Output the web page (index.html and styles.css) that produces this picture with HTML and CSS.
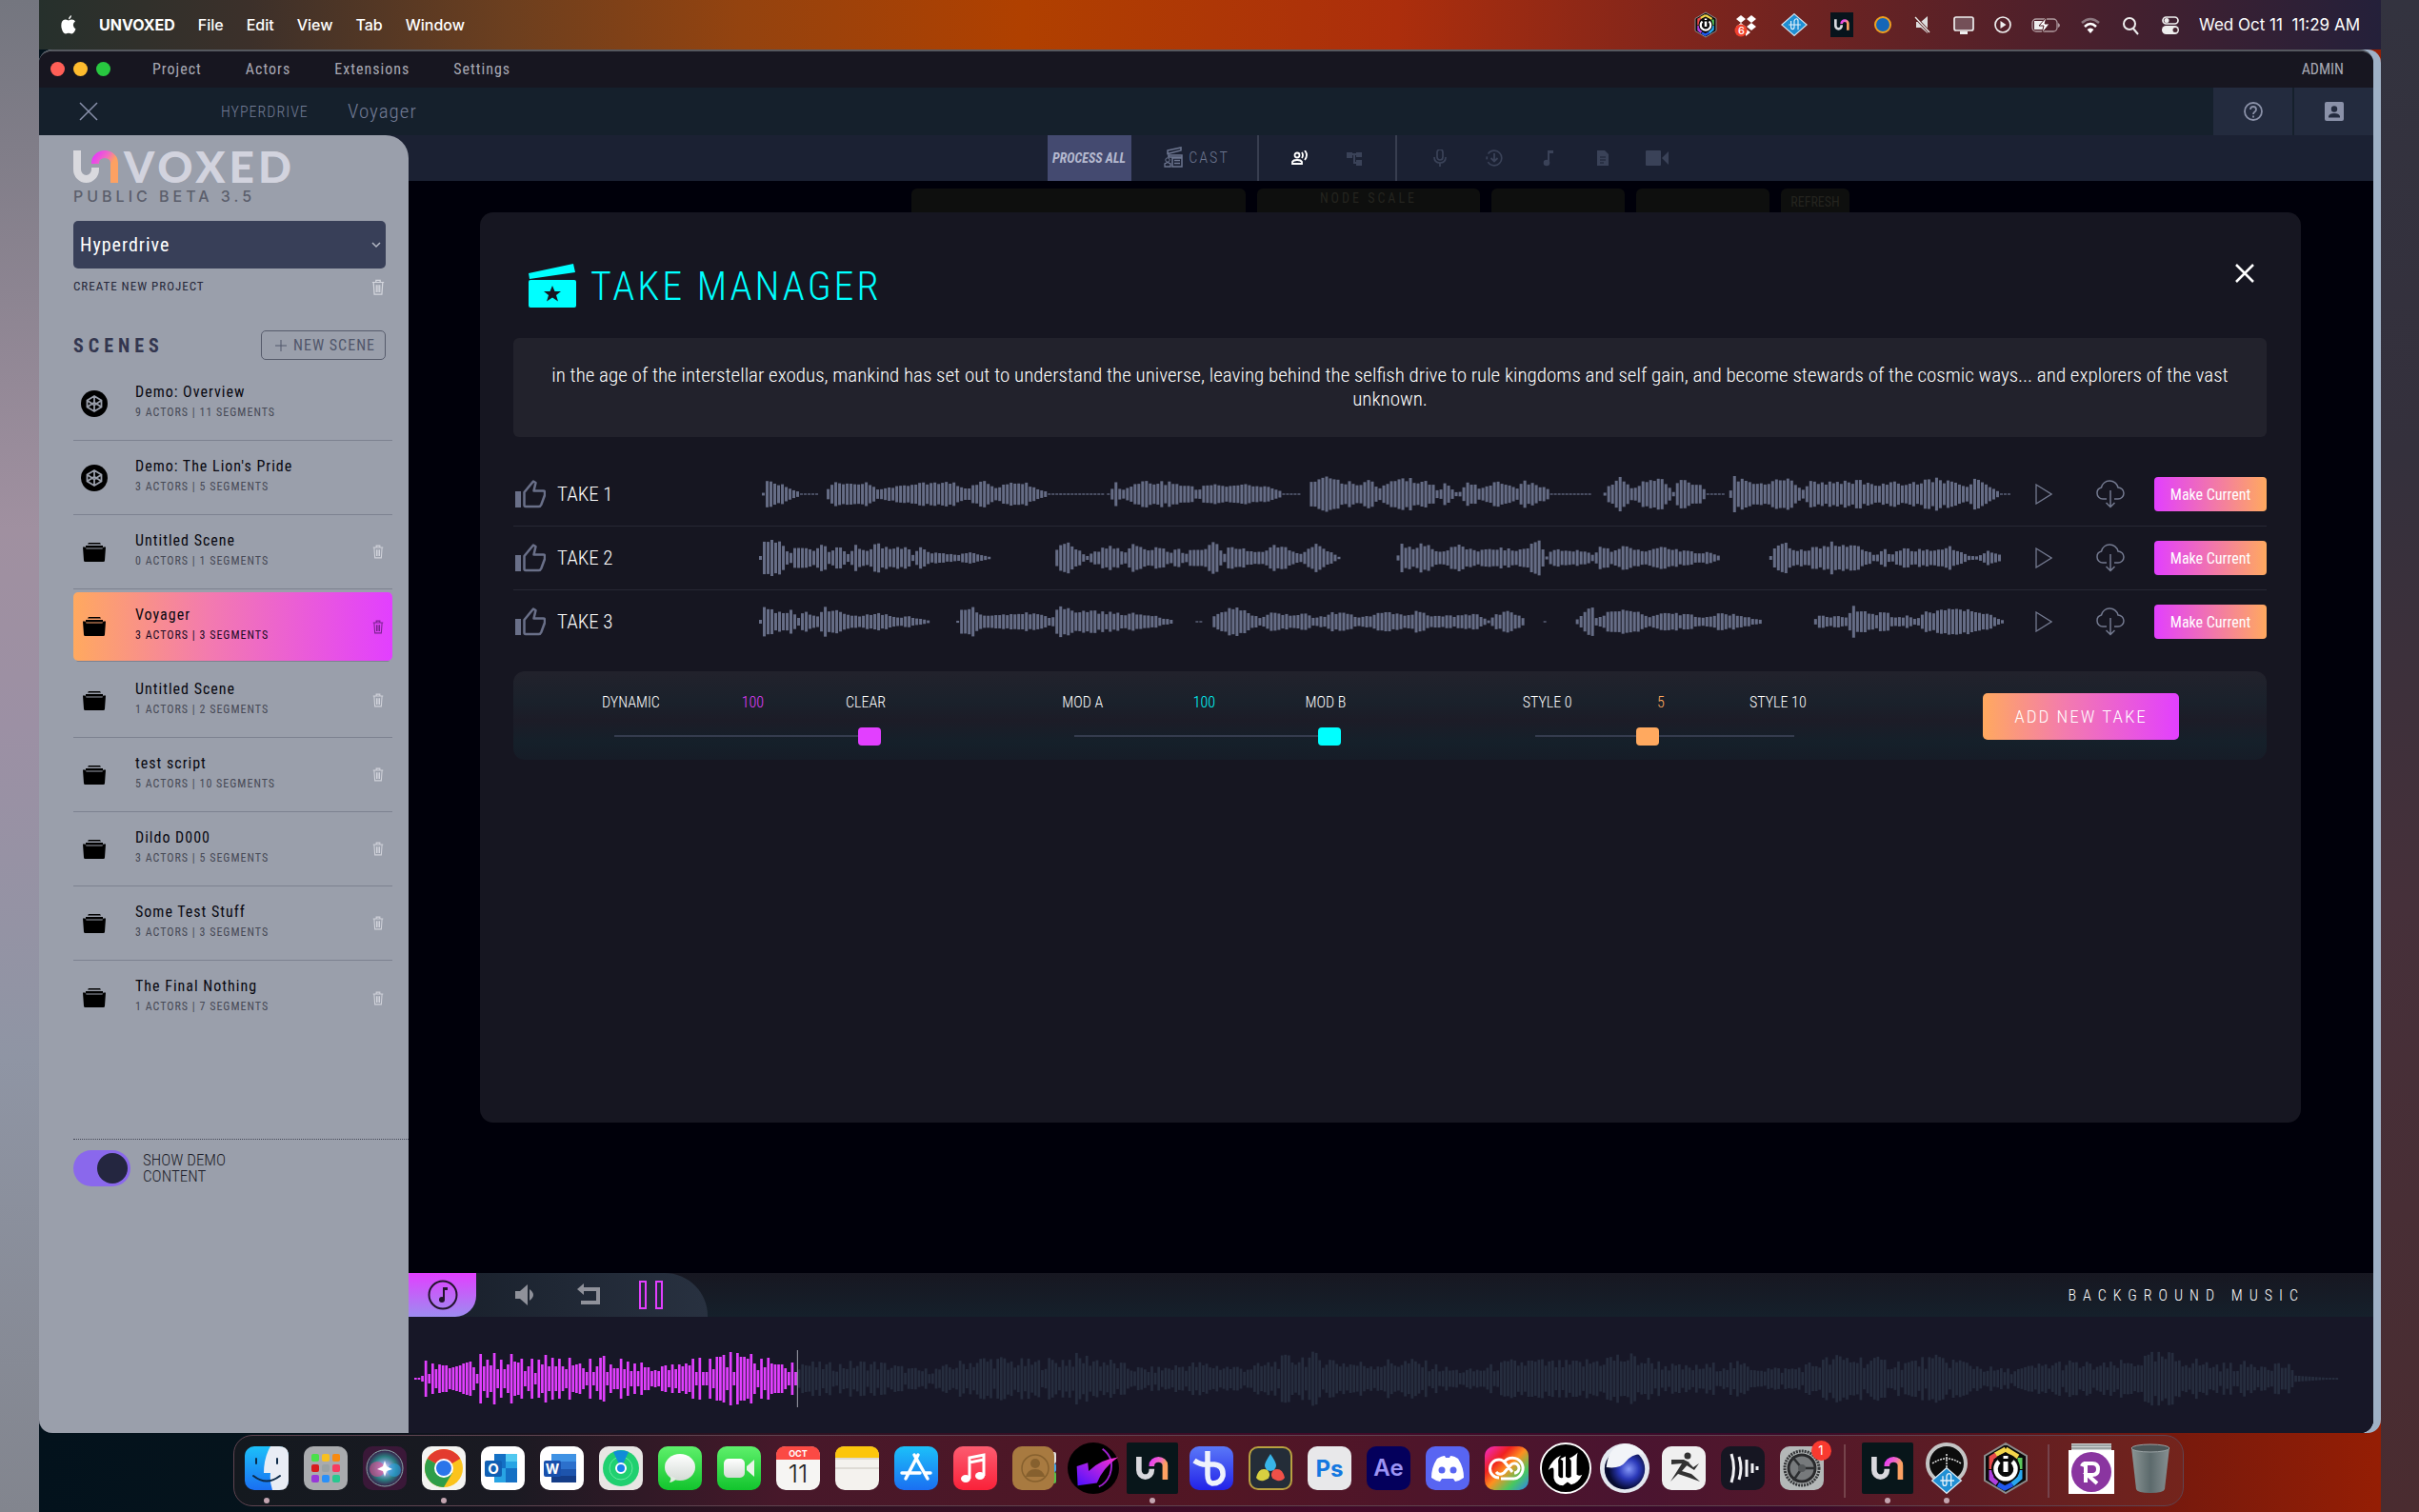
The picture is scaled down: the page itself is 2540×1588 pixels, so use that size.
FILE: index.html
```html
<!DOCTYPE html>
<html lang="en">
<head>
    <meta charset="UTF-8">
    <meta name="viewport" content="width=device-width, initial-scale=1.0">
    <title>UNVOXED - Take Manager</title>
    <link rel="stylesheet" href="styles.css">
</head>
<body>
    <!-- Shared icons -->
    <svg class="sprite" aria-hidden="true">
        <defs>
            <linearGradient id="gBrand" x1="0" x2="1" y1="0" y2="1"><stop offset="0" stop-color="#e83cf5"/><stop offset=".35" stop-color="#f06cc0"/><stop offset=".6" stop-color="#fda162"/></linearGradient>
            <linearGradient id="gBlue" x1="0" x2="0" y1="0" y2="1"><stop offset="0" stop-color="#1cc0f9"/><stop offset="1" stop-color="#1a6ff2"/></linearGradient>
            <linearGradient id="gGreen" x1="0" x2="0" y1="0" y2="1"><stop offset="0" stop-color="#5ef06b"/><stop offset="1" stop-color="#12c42d"/></linearGradient>
            <linearGradient id="gRed" x1="0" x2="0" y1="0" y2="1"><stop offset="0" stop-color="#fc5c70"/><stop offset="1" stop-color="#fa2139"/></linearGradient>
            <linearGradient id="gWhite" x1="0" x2="0" y1="0" y2="1"><stop offset="0" stop-color="#ffffff"/><stop offset="1" stop-color="#d5dbd6"/></linearGradient>
            <linearGradient id="gIndigo" x1="0" x2="0" y1="0" y2="1"><stop offset="0" stop-color="#5a78f8"/><stop offset="1" stop-color="#2222e8"/></linearGradient>
            <linearGradient id="gCloud" x1="0" x2="1" y1="0" y2="1"><stop offset="0" stop-color="#f02cd0"/><stop offset=".3" stop-color="#f02020"/><stop offset=".5" stop-color="#ff9020"/><stop offset=".75" stop-color="#48c860"/><stop offset="1" stop-color="#3080f0"/></linearGradient>
            <linearGradient id="gTick" x1="0" x2="1" y1="1" y2="0"><stop offset="0" stop-color="#4a10ff"/><stop offset="1" stop-color="#ff30d0"/></linearGradient>
            <linearGradient id="gBin" x1="0" x2="1" y1="0" y2="0"><stop offset="0" stop-color="#8b9595"/><stop offset=".5" stop-color="#5c6a6c"/><stop offset="1" stop-color="#879092"/></linearGradient>
            <radialGradient id="gSiri"><stop offset="0" stop-color="#ffffff"/><stop offset=".3" stop-color="#8fa4d8"/><stop offset=".65" stop-color="#2a7d80"/><stop offset="1" stop-color="#3a1c48"/></radialGradient>
            <radialGradient id="gBall" cx=".6" cy=".5"><stop offset="0" stop-color="#8598f8"/><stop offset=".5" stop-color="#2a38b8"/><stop offset="1" stop-color="#060a30"/></radialGradient>
        </defs>

        <symbol id="un" viewBox="0 0 48 34">
            <path d="M4 0v20a9.500 10 0 0 0 19 0v-2" fill="none" stroke="#d9d9de" stroke-width="8"/>
            <path d="M23 14v-1a10 9 0 0 1 20 0v21" fill="none" stroke="url(#gBrand)" stroke-width="8"/>
        </symbol>
        <symbol id="trash" viewBox="0 0 16 20">
            <path d="M1 4h14M5.500 4V1.500h5V4M2.500 4l1 14.500h9L13.500 4M6 7v9M8 7v9M10 7v9" fill="none" stroke="currentColor" stroke-width="1.400"/>
        </symbol>
        <symbol id="cube" viewBox="0 0 28 28">
            <circle cx="14" cy="14" r="14"/>
            <path d="M14 6l7.500 4.500v7L14 22l-7.500-4.500v-7zM6.500 10.500L14 15.500l7.500-5M6.500 17.500L14 12.500l7.500 5M14 6v6.500M14 15.500V22" fill="none" stroke="#9a9fab" stroke-width="1.800"/>
        </symbol>
        <symbol id="folder" viewBox="0 0 24 20">
            <path d="M6 0h12l1 1.500H5zM3 3h18v2.500H3zM0 4.500h2.500l1 2h17l1-2H24L23 18.500a1.500 1.500 0 0 1-1.500 1.500h-19A1.500 1.500 0 0 1 1 18.500z"/>
        </symbol>
        <symbol id="thumb" viewBox="0 0 32 30">
            <path d="M0 12h6v17H0z" fill="currentColor"/>
            <path d="M9.500 13v13.500q0 1.500 1.500 1.500h13.500q2 0 2.800-2L31 16v-3q0-1.500-1.500-1.500h-10L21.500 3 19 1.500 9.500 13z" fill="none" stroke="currentColor" stroke-width="2.500" stroke-linejoin="round"/>
        </symbol>
        <symbol id="play" viewBox="0 0 18 22">
            <path d="M1 1l16 10L1 21z" fill="none" stroke="currentColor" stroke-width="1.300"/>
        </symbol>
        <symbol id="cloud" viewBox="0 0 32 30">
            <path d="M12 20H8a6 6 0 0 1-6-6 6 6 0 0 1 4.500-6A9 9 0 0 1 15 1a9 9 0 0 1 9 7 6 6 0 0 1 6 6 6 6 0 0 1-6 6h-4M16 11v17M11.500 24l4.500 4.500 4.500-4.500" fill="none" stroke="currentColor" stroke-width="1.500"/>
        </symbol>
        <symbol id="hex" viewBox="0 0 48 54">
            <path d="M24 1l22 13v26L24 53 2 40V14z" fill="#0a0a0a" stroke="#8c8c8c" stroke-width="2"/>
            <g fill="none" stroke-width="5"><path d="M24 7L13 13" stroke="#f3d54a"/><path d="M24 7l13 8" stroke="#f3d54a"/><path d="M39 16v12" stroke="#5cc85c"/><path d="M39 29v8l-8 7" stroke="#28a8f0"/><path d="M31 44l-8 4-7-4" stroke="#2058f0"/><path d="M15 43l-6-5V29" stroke="#b040e0"/><path d="M9 28V16l5-3" stroke="#e84a4a"/></g>
            <circle cx="24" cy="27" r="15" fill="#0a0a0a"/>
            <path d="M17 20a10.500 10.500 0 1 0 14 0" fill="none" stroke="#fff" stroke-width="4.500"/>
            <path d="M24 14v3M24 20v11" stroke="#fff" stroke-width="5"/>
        </symbol>
        <symbol id="ua" viewBox="0 0 48 42">
            <path d="M24 1l23 20-23 20L1 21z" fill="#1f8fd4" stroke="#d8e6f0" stroke-width="2"/>
            <path d="M14 21h22M18 14v11q0 4 3 4t3-4V14q1-4 4-4t3 4v16" fill="none" stroke="#e4f1fa" stroke-width="2"/>
        </symbol>
    </svg>

    <div class="desktop">
        <!-- System menu bar -->
        <header class="menubar">
            <nav class="menubar-left" aria-label="System menu">
                <svg class="apple" viewBox="0 0 16 20"><path d="M11 0q0 3-3 4.500Q8 1.500 11 0zM8 5.500q1.500-1 3.500-1Q14 4.500 15 6.500q-2.500 1.500-2 4.500.5 2.500 2.500 3.500-2 5-4.500 5-1.500-.8-3-.8t-3 .8Q2 19.500.500 13-.500 5 4.500 4.500q1.500 0 3.500 1z" fill="#fff"/></svg>
                <a href="#" class="app-name">UNVOXED</a>
                <a href="#">File</a>
                <a href="#">Edit</a>
                <a href="#">View</a>
                <a href="#">Tab</a>
                <a href="#">Window</a>
            </nav>
            <div class="menubar-right">
                <svg class="w44" viewBox="0 0 44 28"><use href="#hex" x="10" y="0" width="24" height="28"/></svg>
                <svg class="w44" viewBox="0 0 44 28"><path d="M15 4l5 4-5 4-5-4zM26 4l5 4-5 4-5-4zM15 12l5 4-5 4-5-4zM26 12l5 4-5 4-5-4zM20 18l5 4-5 4z" fill="#fff"/><circle cx="15" cy="20" r="6.500" fill="#f0412c"/><text x="12" y="24" font-family="Inter" font-size="11" fill="#fff">6</text></svg>
                <svg class="w54" viewBox="0 0 54 28"><use href="#ua" x="10" y="2" width="34" height="24"/></svg>
                <svg class="w46" viewBox="0 0 46 28"><path d="M11 1h24v26H11z" fill="#08141c"/><use href="#un" x="15" y="8" width="16" height="12"/></svg>
                <svg class="w40" viewBox="0 0 40 28"><circle cx="20" cy="14" r="8" fill="#1466b8" stroke="#f0a020" stroke-width="2"/></svg>
                <svg class="w44" viewBox="0 0 44 28"><path d="M15 11h5l7-6v18l-7-6h-5z" fill="#ddd"/><path d="M14 6l15 16" stroke="#5a2020" stroke-width="3"/><path d="M14 6l15 16" stroke="#eee" stroke-width="1.300"/></svg>
                <svg class="w42" viewBox="0 0 42 28"><rect x="11" y="6" width="20" height="14" rx="2" fill="#745058" stroke="#eee" stroke-width="1.700"/><path d="M17 21h8v3h-8z" fill="#eee"/></svg>
                <svg class="w40" viewBox="0 0 40 28"><circle cx="20" cy="14" r="8" fill="none" stroke="#eee" stroke-width="1.700"/><path d="M17.500 10l6 4-6 4z" fill="#eee"/></svg>
                <svg class="w50" viewBox="0 0 50 28"><rect x="11" y="8" width="26" height="13" rx="4" fill="none" stroke="#b09aa0" stroke-width="1.300"/><path d="M13 10h10v9H13z" fill="#eee"/><path d="M38 12v5q2-1 2-2.500T38 12z" fill="#b09aa0"/><path d="M26 6l-8 9h5l-2 8 8-10h-5z" fill="#fff" stroke="#4d2028" stroke-width="1"/></svg>
                <svg class="w44" viewBox="0 0 44 28"><g fill="none" stroke-width="2.500"><path d="M13 12q9-8 18 0" stroke="#8d7880"/><path d="M16 16q6-6 12 0" stroke="#fff"/></g><path d="M18.500 19q3.500-3 7 0L22 23z" fill="#fff"/></svg>
                <svg class="w40" viewBox="0 0 40 28"><circle cx="19" cy="13" r="6" fill="none" stroke="#eee" stroke-width="2"/><path d="M23 18l5 6" stroke="#eee" stroke-width="2"/></svg>
                <svg class="w44" viewBox="0 0 44 28"><rect x="14" y="6" width="16" height="7" rx="3.500" fill="none" stroke="#eee" stroke-width="1.700"/><circle cx="18" cy="9.500" r="2.500" fill="#eee"/><rect x="13" y="15" width="18" height="9" rx="4.500" fill="#eee"/><circle cx="27" cy="19.500" r="2.500" fill="#442430"/></svg>
                <span class="clock">Wed Oct 11 &nbsp;11:29 AM</span>
            </div>
        </header>

        <div class="window-back">
            <div class="window">
                <!-- Title bar -->
                <div class="titlebar">
                    <div class="lights"><span class="red"></span><span class="yellow"></span><span class="green"></span></div>
                    <nav class="title-menu" aria-label="Application menu">
                        <a href="#">Project</a>
                        <a href="#">Actors</a>
                        <a href="#">Extensions</a>
                        <a href="#">Settings</a>
                    </nav>
                    <a href="#" class="admin">ADMIN</a>
                </div>

                <!-- Project header -->
                <div class="project-bar">
                    <button class="close-project" aria-label="Close project"><svg viewBox="0 0 20 20"><path d="M1 1l18 18M19 1L1 19" stroke="currentColor" stroke-width="1.500"/></svg></button>
                    <span class="project-name">HYPERDRIVE</span>
                    <span class="scene-name">Voyager</span>
                    <div class="project-tools">
                        <button aria-label="Help"><svg viewBox="0 0 20 20"><circle cx="10" cy="10" r="9" fill="none" stroke="currentColor" stroke-width="1.800"/><path d="M7 8q0-3 3-3t3 3q0 1.500-1.500 2.500T10 13M10 14.500v2" fill="none" stroke="currentColor" stroke-width="1.800"/></svg></button>
                        <button aria-label="Account"><svg viewBox="0 0 20 20"><rect width="20" height="20" rx="2" fill="currentColor"/><circle cx="10" cy="7.500" r="3.200" fill="#232b3e"/><path d="M4 16.500v-1.500q1-3 6-3t6 3v1.500z" fill="#232b3e"/></svg></button>
                    </div>
                </div>

                <div class="body">
                    <!-- Sidebar -->
                    <aside class="sidebar">
                        <div class="logo"><svg viewBox="0 0 48 34"><use href="#un"/></svg><span>VOXED</span></div>
                        <div class="version">PUBLIC BETA 3.5</div>
                        <div class="project-select">
                            <select aria-label="Project"><option>Hyperdrive</option></select>
                            <svg viewBox="0 0 10 7"><path d="M1 1l4 4 4-4" fill="none" stroke="#b4b8c4" stroke-width="1.500"/></svg>
                        </div>
                        <div class="create-row">
                            <a href="#">CREATE NEW PROJECT</a>
                            <button aria-label="Delete project"><svg viewBox="0 0 16 20"><use href="#trash"/></svg></button>
                        </div>
                        <div class="scenes-head">
                            <h2>SCENES</h2>
                            <button class="new-scene"><svg viewBox="0 0 12 12"><path d="M6 0v12M0 6h12" stroke="currentColor"/></svg>NEW SCENE</button>
                        </div>
                        <ul class="scenes">
                            <li><svg class="cube" viewBox="0 0 28 28"><use href="#cube"/></svg><div><strong>Demo: Overview</strong><small>9 ACTORS | 11 SEGMENTS</small></div></li>
                            <li><svg class="cube" viewBox="0 0 28 28"><use href="#cube"/></svg><div><strong>Demo: The Lion's Pride</strong><small>3 ACTORS | 5 SEGMENTS</small></div></li>
                            <li><svg class="folder" viewBox="0 0 24 20"><use href="#folder"/></svg><div><strong>Untitled Scene</strong><small>0 ACTORS | 1 SEGMENTS</small></div><button aria-label="Delete scene"><svg viewBox="0 0 16 20"><use href="#trash"/></svg></button></li>
                            <li class="active"><svg class="folder" viewBox="0 0 24 20"><use href="#folder"/></svg><div><strong>Voyager</strong><small>3 ACTORS | 3 SEGMENTS</small></div><button aria-label="Delete scene"><svg viewBox="0 0 16 20"><use href="#trash"/></svg></button></li>
                            <li><svg class="folder" viewBox="0 0 24 20"><use href="#folder"/></svg><div><strong>Untitled Scene</strong><small>1 ACTORS | 2 SEGMENTS</small></div><button aria-label="Delete scene"><svg viewBox="0 0 16 20"><use href="#trash"/></svg></button></li>
                            <li><svg class="folder" viewBox="0 0 24 20"><use href="#folder"/></svg><div><strong>test script</strong><small>5 ACTORS | 10 SEGMENTS</small></div><button aria-label="Delete scene"><svg viewBox="0 0 16 20"><use href="#trash"/></svg></button></li>
                            <li><svg class="folder" viewBox="0 0 24 20"><use href="#folder"/></svg><div><strong>Dildo D000</strong><small>3 ACTORS | 5 SEGMENTS</small></div><button aria-label="Delete scene"><svg viewBox="0 0 16 20"><use href="#trash"/></svg></button></li>
                            <li><svg class="folder" viewBox="0 0 24 20"><use href="#folder"/></svg><div><strong>Some Test Stuff</strong><small>3 ACTORS | 3 SEGMENTS</small></div><button aria-label="Delete scene"><svg viewBox="0 0 16 20"><use href="#trash"/></svg></button></li>
                            <li><svg class="folder" viewBox="0 0 24 20"><use href="#folder"/></svg><div><strong>The Final Nothing</strong><small>1 ACTORS | 7 SEGMENTS</small></div><button aria-label="Delete scene"><svg viewBox="0 0 16 20"><use href="#trash"/></svg></button></li>
                        </ul>
                        <div class="demo-toggle">
                            <input type="checkbox" id="showDemo" checked>
                            <label for="showDemo">SHOW DEMO<br>CONTENT</label>
                        </div>
                    </aside>

                    <main class="main">
                        <!-- Toolbar -->
                        <div class="toolbar">
                            <button class="process">PROCESS ALL</button>
                            <button class="cast"><svg viewBox="0 0 20 22"><path d="M4 4l14-3v3L4 7.500zM5 9h14v2H5zM9 12h10v9H9zM11 14.500h6M11 17.500h6" fill="none" stroke="currentColor" stroke-width="1.500"/><circle cx="4" cy="14" r="2.200" fill="none" stroke="currentColor"/><path d="M1 21v-3l3-1.500L7 18v3z" fill="none" stroke="currentColor" stroke-width="1.300"/></svg>CAST</button>
                            <div class="tool-group views">
                                <button class="on" aria-label="Voices"><svg viewBox="0 0 18 16"><circle cx="6" cy="5" r="2.500" fill="none" stroke="currentColor" stroke-width="1.800"/><path d="M1 14v-2q1-2 5-2t5 2v2zM11 2q2 3 0 6M14 0q4 5 0 10" fill="none" stroke="currentColor" stroke-width="1.800"/></svg></button>
                                <button aria-label="Nodes"><svg viewBox="0 0 18 16"><path d="M1 2h6v6H1zM11 2h6v5h-6zM11 10h6v6h-6z" fill="currentColor"/><path d="M6 4h6M9 4v9h3" fill="none" stroke="currentColor" stroke-width="2"/></svg></button>
                            </div>
                            <div class="tool-group media">
                                <button aria-label="Record"><svg viewBox="0 0 18 18"><rect x="6" y="0" width="6" height="11" rx="3" fill="none" stroke="currentColor" stroke-width="1.700"/><path d="M3 8q0 6 6 6t6-6M9 14v4" fill="none" stroke="currentColor" stroke-width="1.700"/></svg></button>
                                <button aria-label="Download"><svg viewBox="0 0 18 18"><circle cx="9" cy="9" r="7.800" fill="none" stroke="currentColor" stroke-width="1.700" stroke-dasharray="20 3 3 3"/><path d="M9 4v8M5.500 9L9 12.500 12.500 9" fill="none" stroke="currentColor" stroke-width="1.800"/></svg></button>
                                <button aria-label="Music"><svg viewBox="0 0 18 18"><path d="M8 14V1h6v3h-4v10" fill="currentColor"/><circle cx="7" cy="14" r="3.300" fill="currentColor"/></svg></button>
                                <button aria-label="Document"><svg viewBox="0 0 18 18"><path d="M3 1h8l4 4v12H3z" fill="currentColor"/><path d="M6 8h6M6 11h6M6 14h4" stroke="#1b2133"/></svg></button>
                                <button aria-label="Video"><svg class="wide" viewBox="0 0 24 18"><rect y="1" width="16" height="16" rx="1" fill="currentColor"/><path d="M17 9l7-7v14z" fill="currentColor"/></svg></button>
                            </div>
                        </div>

                        <div class="stage">
                            <!-- Node view tools, dimmed under the dialog -->
                            <div class="dimmed" aria-hidden="true">
                                <div class="dim-card c1"></div>
                                <div class="dim-card c2"><span>NODE SCALE</span></div>
                                <div class="dim-card c3"></div>
                                <div class="dim-card c3"></div>
                                <div class="dim-card c4"><span>REFRESH</span></div>
                            </div>

                            <!-- Take manager -->
                            <section class="dialog" role="dialog" aria-labelledby="dialogTitle">
                                <div class="dialog-head">
                                    <svg class="clapper" viewBox="0 0 50 46"><path d="M0 10L47 0l2 9L1 16zM2 17h46q2 0 2 2v25q0 2-2 2H2q-2 0-2-2V19q0-2 2-2z" fill="#00ffff"/><path d="M25 23l2.500 6h6.500l-5 4 2 6.500-6-4-6 4 2-6.500-5-4h6.500z" fill="#161621"/></svg>
                                    <h1 id="dialogTitle">TAKE MANAGER</h1>
                                    <button class="close-dialog" aria-label="Close"><svg viewBox="0 0 20 20"><path d="M1 1l18 18M19 1L1 19" stroke="#fff" stroke-width="2.500"/></svg></button>
                                </div>
                                <p class="script-text">in the age of the interstellar exodus, mankind has set out to understand the universe, leaving behind the selfish drive to rule kingdoms and self gain, and become stewards of the cosmic ways... and explorers of the vast unknown.</p>

                                <ul class="takes">
                                    <li>
                                        <div class="take-name"><button aria-label="Like take 1"><svg viewBox="0 0 32 30"><use href="#thumb"/></svg></button>TAKE 1</div>
                                        <svg class="wave" data-take="0" viewBox="795 0 1320 60" preserveAspectRatio="none"></svg>
                                        <button aria-label="Play take 1"><svg class="play" viewBox="0 0 18 22"><use href="#play"/></svg></button>
                                        <button aria-label="Download take 1"><svg class="cloud" viewBox="0 0 32 30"><use href="#cloud"/></svg></button>
                                        <button class="make-current">Make Current</button>
                                    </li>
                                    <li>
                                        <div class="take-name"><button aria-label="Like take 2"><svg viewBox="0 0 32 30"><use href="#thumb"/></svg></button>TAKE 2</div>
                                        <svg class="wave" data-take="1" viewBox="795 0 1320 60" preserveAspectRatio="none"></svg>
                                        <button aria-label="Play take 2"><svg class="play" viewBox="0 0 18 22"><use href="#play"/></svg></button>
                                        <button aria-label="Download take 2"><svg class="cloud" viewBox="0 0 32 30"><use href="#cloud"/></svg></button>
                                        <button class="make-current">Make Current</button>
                                    </li>
                                    <li>
                                        <div class="take-name"><button aria-label="Like take 3"><svg viewBox="0 0 32 30"><use href="#thumb"/></svg></button>TAKE 3</div>
                                        <svg class="wave" data-take="2" viewBox="795 0 1320 60" preserveAspectRatio="none"></svg>
                                        <button aria-label="Play take 3"><svg class="play" viewBox="0 0 18 22"><use href="#play"/></svg></button>
                                        <button aria-label="Download take 3"><svg class="cloud" viewBox="0 0 32 30"><use href="#cloud"/></svg></button>
                                        <button class="make-current">Make Current</button>
                                    </li>
                                </ul>

                                <div class="mixer">
                                    <div class="slider pink">
                                        <div class="slider-labels"><label for="clarity">DYNAMIC</label><output>100</output><span>CLEAR</span></div>
                                        <input type="range" id="clarity" min="0" max="100" value="100">
                                    </div>
                                    <div class="slider cyan">
                                        <div class="slider-labels"><label for="model">MOD A</label><output>100</output><span>MOD B</span></div>
                                        <input type="range" id="model" min="0" max="100" value="100">
                                    </div>
                                    <div class="slider orange">
                                        <div class="slider-labels"><label for="style">STYLE 0</label><output>5</output><span>STYLE 10</span></div>
                                        <input type="range" id="style" min="0" max="12" value="5">
                                    </div>
                                    <button class="add-take">ADD NEW TAKE</button>
                                </div>
                            </section>
                        </div>

                        <!-- Background music player -->
                        <footer class="player">
                            <div class="player-bar">
                                <div class="player-controls">
                                    <button class="music-tab" aria-label="Background music"><svg viewBox="0 0 32 32"><circle cx="16" cy="16" r="14.500" fill="none" stroke="#22142c" stroke-width="2"/><path d="M16 21V8h5v3h-3v10" fill="#22142c"/><circle cx="15" cy="21" r="3" fill="#22142c"/></svg></button>
                                    <button aria-label="Volume"><svg viewBox="0 0 24 24"><path d="M1 8h5l8-7v22l-8-7H1zM16 6q8 6 0 12z" fill="currentColor"/></svg></button>
                                    <button aria-label="Loop"><svg viewBox="0 0 24 24"><path d="M7 6h15v14H4" fill="none" stroke="currentColor" stroke-width="4"/><path d="M0 6l7-6v12z" fill="currentColor"/></svg></button>
                                    <button aria-label="Pause"><svg class="pause" viewBox="0 0 26 30"><path d="M1 1h6v28H1zM18 1h6v28h-6z" fill="none" stroke="#e23fff" stroke-width="2"/></svg></button>
                                </div>
                                <span class="player-title">BACKGROUND MUSIC</span>
                            </div>
                            <svg class="music-wave" id="musicWave" viewBox="0 0 2248 60" preserveAspectRatio="none"></svg>
                        </footer>
                    </main>
                </div>
            </div>
        </div>

        <!-- Dock -->
        <div class="dock-area">
            <nav class="dock" aria-label="Dock">
                <button class="running" aria-label="Finder"><svg viewBox="0 0 46 46"><rect width="46" height="46" rx="10" fill="url(#gBlue)"/><path d="M27 0h9q10 0 10 10v26q0 10-10 10h-7q-3-9-2-18h-7Q20 12 27 0z" fill="#e9edf5"/><path d="M12 13v5M34 13v5M9 31q14 11 28 0" fill="none" stroke="#0c2a48" stroke-width="2" stroke-linecap="round"/></svg></button>
                <button aria-label="Launchpad"><svg viewBox="0 0 46 46"><rect width="46" height="46" rx="10" fill="#a9abae"/><rect x="8" y="8" width="8" height="8" rx="2" fill="#4ae04a"/><rect x="19" y="8" width="8" height="8" rx="2" fill="#f8c020"/><rect x="30" y="8" width="8" height="8" rx="2" fill="#f88a10"/><rect x="8" y="19" width="8" height="8" rx="2" fill="#d81c1c"/><rect x="19" y="19" width="8" height="8" rx="2" fill="#9aa2a4"/><rect x="30" y="19" width="8" height="8" rx="2" fill="#f83c60"/><rect x="8" y="30" width="8" height="8" rx="2" fill="#9838d8"/><rect x="19" y="30" width="8" height="8" rx="2" fill="#2a90f8"/><rect x="30" y="30" width="8" height="8" rx="2" fill="#28c890"/></svg></button>
                <button aria-label="Siri"><svg viewBox="0 0 46 46"><rect width="46" height="46" rx="10" fill="#3a1838"/><circle cx="23" cy="23" r="19" fill="url(#gSiri)" stroke="#8aa" stroke-width="1"/><circle cx="15" cy="24" r="8" fill="#e0468c" opacity=".6"/><circle cx="33" cy="25" r="7" fill="#28a0e0" opacity=".6"/><path d="M23 15l2 6 6 3-6 2-2 6-2-6-6-2 6-3z" fill="#fff"/></svg></button>
                <button class="running" aria-label="Chrome"><svg viewBox="0 0 46 46"><rect width="46" height="46" rx="10" fill="#f4f4f2"/><circle cx="23" cy="23" r="20" fill="#fbc31c"/><path d="M23 23L5.700 13A20 20 0 0 1 40.300 13z" fill="#e33b2e"/><path d="M23 23L5.700 13A20 20 0 0 0 23 43l9-15z" fill="#2e9e4a"/><circle cx="23" cy="23" r="10" fill="#fff"/><circle cx="23" cy="23" r="8" fill="#2a75ea"/></svg></button>
                <button aria-label="Outlook"><svg viewBox="0 0 46 46"><rect width="46" height="46" rx="10" fill="#fff"/><path d="M14 8h24v30H14z" fill="#28a4e4"/><path d="M14 8h12v15H14zM26 23h12v15H26z" fill="#1470c4"/><path d="M26 8h12v8H26z" fill="#50c8f0"/><rect x="4" y="15" width="18" height="17" rx="2" fill="#1060b4"/><text x="13" y="29" text-anchor="middle" font-family="Inter" font-weight="700" font-size="15" fill="#fff">O</text></svg></button>
                <button aria-label="Word"><svg viewBox="0 0 46 46"><rect width="46" height="46" rx="10" fill="#fff"/><path d="M12 8h26v8H12z" fill="#3f92e4"/><path d="M12 16h26v8H12z" fill="#2c70cc"/><path d="M12 24h26v7H12z" fill="#1d54ac"/><path d="M12 31h26v7H12z" fill="#143d88"/><rect x="4" y="15" width="18" height="17" rx="2" fill="#1850ac"/><text x="13" y="29" text-anchor="middle" font-family="Inter" font-weight="700" font-size="14" fill="#fff">W</text></svg></button>
                <button aria-label="Find My"><svg viewBox="0 0 46 46"><rect width="46" height="46" rx="10" fill="#e8e6e4"/><circle cx="23" cy="23" r="19" fill="#20d070"/><circle cx="23" cy="23" r="12" fill="none" stroke="#68e8a0"/><path d="M23 23L15 6a19 19 0 0 1 16 0z" fill="#108cd8"/><circle cx="23" cy="23" r="5" fill="#1a80ec" stroke="#fff" stroke-width="2"/></svg></button>
                <button aria-label="Messages"><svg viewBox="0 0 46 46"><rect width="46" height="46" rx="10" fill="url(#gGreen)"/><ellipse cx="23" cy="22" rx="16" ry="14" fill="url(#gWhite)"/><path d="M13 31q1 4-1 7 5-1 7-4z" fill="#e2ece2"/></svg></button>
                <button aria-label="FaceTime"><svg viewBox="0 0 46 46"><rect width="46" height="46" rx="10" fill="url(#gGreen)"/><rect x="7" y="13" width="22" height="20" rx="5" fill="url(#gWhite)"/><path d="M31 21l8-7v18l-8-7z" fill="#e8f4e8"/></svg></button>
                <button aria-label="Calendar"><svg viewBox="0 0 46 46"><rect width="46" height="46" rx="10" fill="#f6f5f3"/><path d="M0 14v-4Q0 0 10 0h26q10 0 10 10v4z" fill="#fb4a44"/><text x="23" y="11" text-anchor="middle" font-family="Inter" font-weight="700" font-size="9" fill="#fff">OCT</text><text x="23" y="38" text-anchor="middle" font-family="Inter" font-weight="300" font-size="26" fill="#222">11</text></svg></button>
                <button aria-label="Notes"><svg viewBox="0 0 46 46"><rect width="46" height="46" rx="10" fill="#f4f2ee"/><path d="M0 12v-2Q0 0 10 0h26q10 0 10 10v2z" fill="#fcc60c"/><path d="M0 13h46M0 23h46" stroke="#c8c4bc"/></svg></button>
                <button aria-label="App Store"><svg viewBox="0 0 46 46"><rect width="46" height="46" rx="10" fill="url(#gBlue)"/><path d="M25 9L12 34M21 9l14 25M8 28h19M33 28h5" fill="none" stroke="#fff" stroke-width="3.500" stroke-linecap="round"/></svg></button>
                <button aria-label="Music"><svg viewBox="0 0 46 46"><rect width="46" height="46" rx="10" fill="url(#gRed)"/><path d="M17 34V12l15-3v22M17 17l15-3" fill="none" stroke="#fff" stroke-width="3"/><ellipse cx="13" cy="34" rx="5" ry="4" fill="#fff"/><ellipse cx="28" cy="31" rx="5" ry="4" fill="#fff"/></svg></button>
                <button aria-label="Contacts"><svg viewBox="0 0 46 46"><rect x="40" y="6" width="6" height="12" rx="2" fill="#e0e0e0"/><rect x="40" y="18" width="6" height="9" rx="2" fill="#48a8e8"/><rect x="40" y="27" width="6" height="12" rx="2" fill="#58c048"/><rect width="44" height="46" rx="10" fill="#a87a40"/><circle cx="24" cy="23" r="14" fill="none" stroke="#86602e" stroke-width="1.500"/><circle cx="24" cy="18" r="5" fill="#86602e"/><path d="M14 32q2-8 10-8t10 8z" fill="#86602e"/></svg></button>
                <button class="big" aria-label="Violet editor"><svg viewBox="0 0 56 56"><circle cx="28" cy="28" r="28" fill="#000"/><path d="M38 7q14 10 8 28-4 10-12 13" fill="none" stroke="#a020d0" stroke-width="2"/><path d="M10 26l12-4 1 9Q36 18 55 16 38 28 32 44L11 47z" fill="url(#gTick)"/></svg></button>
                <button class="big running" aria-label="Unvoxed"><svg viewBox="0 0 54 54"><rect width="54" height="54" rx="2" fill="#08161a"/><use href="#un" x="10" y="15" width="34" height="24"/></svg></button>
                <button aria-label="Notes board"><svg viewBox="0 0 46 46"><rect width="46" height="46" rx="10" fill="url(#gIndigo)"/><path d="M5 15q7 5 15 4h6q10 1 9 12-2 8-11 8-5-1-5-9V5" fill="none" stroke="#eef2fc" stroke-width="5.500"/></svg></button>
                <button aria-label="Resolve"><svg viewBox="0 0 46 46"><rect x="1" y="1" width="44" height="44" rx="9" fill="#242d38" stroke="#b8a040" stroke-width="2"/><path d="M23 8q6 9 6 12a6 6 0 0 1-12 0q0-3 6-12z" fill="#38b4e8"/><path d="M8 33q2-9 8-9 5 0 6 5t-6 7q-5 1-8-3z" fill="#d8d040"/><path d="M38 33q-2-9-8-9-5 0-6 5t6 7q5 1 8-3z" fill="#f05048"/></svg></button>
                <button aria-label="Photoshop"><svg viewBox="0 0 46 46"><rect width="46" height="46" rx="10" fill="#e8e8ea"/><text x="23" y="32" text-anchor="middle" font-family="Inter" font-weight="700" font-size="24" fill="#1478e0">Ps</text></svg></button>
                <button aria-label="After Effects"><svg viewBox="0 0 46 46"><rect width="46" height="46" rx="10" fill="#04005c"/><text x="23" y="31" text-anchor="middle" font-family="Inter" font-weight="600" font-size="24" fill="#9c94f4">Ae</text></svg></button>
                <button aria-label="Discord"><svg viewBox="0 0 46 46"><rect width="46" height="46" rx="10" fill="#5865f2"/><path d="M12 13q5-3 8-3l1 2h4l1-2q4 0 8 3 6 9 6 20-4 3-9 4l-2-3H17l-2 3q-5-1-9-4 0-11 6-20z" fill="#fff"/><circle cx="17" cy="25" r="3.500" fill="#5865f2"/><circle cx="29" cy="25" r="3.500" fill="#5865f2"/></svg></button>
                <button aria-label="Creative Cloud"><svg viewBox="0 0 46 46"><rect width="46" height="46" rx="10" fill="url(#gCloud)"/><path d="M15 33a9 9 0 0 1 0-19q4 0 7 4l7 9M31 34a11 11 0 1 0-11-17M31 34H17M31 28a5 5 0 1 0-4-8L20 28q-5 3-8-1" fill="none" stroke="#fff" stroke-width="3"/></svg></button>
                <button class="big" aria-label="Unreal"><svg viewBox="0 0 56 56"><circle cx="28" cy="28" r="27" fill="#000" stroke="#fff" stroke-width="2"/><path d="M9 30q4-12 14-16-4 4-3 9v13q2 4 5 2V20l-3-2 6-3v22q3 3 6 0V20l-2-3q6-2 9-6-1 4-1 8v16q3 2 6 0-4 9-12 11l-4-3-5 4q-8 0-10-8v-9q0-5-6 0z" fill="#fff"/></svg></button>
                <button class="big" aria-label="Cinema 4D"><svg viewBox="0 0 56 56"><circle cx="28" cy="28" r="27" fill="#e4e8f0"/><circle cx="28" cy="29" r="22" fill="url(#gBall)"/><path d="M28 1q14 0 21 12-12-2-20 8-6 8-21 6Q10 4 28 1z" fill="#f2f4f8"/></svg></button>
                <button aria-label="ZBrush"><svg viewBox="0 0 46 46"><rect width="46" height="46" rx="10" fill="#f0f0f0"/><circle cx="27" cy="10" r="3.500" fill="#333"/><path d="M10 14h13l6 3-8 9 10 3 9 8-11-4-12-4-8 8 7-11 5-8-11 1zM28 17l5 5 6-4-5 7-8-5z" fill="#333"/></svg></button>
                <button aria-label="Audio"><svg viewBox="0 0 46 46"><rect width="46" height="46" rx="10" fill="#161622"/><path d="M11 8q5 15 0 30M19 11q4 12 0 24M27 14v18M33 18v10M38 21v4" fill="none" stroke="#f0f0f4" stroke-width="3"/></svg></button>
                <button aria-label="System Settings"><svg viewBox="0 0 46 46"><rect width="46" height="46" rx="10" fill="#b4b8b8"/><circle cx="23" cy="23" r="18" fill="none" stroke="#343638" stroke-width="3" stroke-dasharray="2 1"/><circle cx="23" cy="23" r="14" fill="#777a7c" stroke="#28292b" stroke-width="3"/><path d="M23 23L13 11M23 23h15M23 23L14 36" stroke="#2c2e30" stroke-width="2.500"/><circle cx="23" cy="23" r="4" fill="#55585a"/></svg><span class="badge">1</span></button>
                <span class="divider"></span>
                <button class="big running" aria-label="Unvoxed"><svg viewBox="0 0 54 54"><rect width="54" height="54" rx="2" fill="#08161a"/><use href="#un" x="10" y="15" width="34" height="24"/></svg></button>
                <button class="big running" aria-label="UA Console"><svg viewBox="0 0 54 54"><circle cx="27" cy="22" r="20" fill="#0c0c0c" stroke="#c4c4c4" stroke-width="4"/><path d="M12 22q15-10 30 0M27 12v14" fill="none" stroke="#ddd" stroke-width="1.500" stroke-dasharray="2 1"/><use href="#ua" x="4" y="26" width="46" height="28"/></svg></button>
                <button class="big" aria-label="Power"><svg viewBox="0 0 48 54"><use href="#hex"/></svg></button>
                <span class="divider"></span>
                <button class="big" aria-label="Document"><svg viewBox="0 0 54 54"><path d="M6 1h42v8H6z" fill="#cfd4d4"/><path d="M6 3h42M6 6h42" stroke="#687070"/><path d="M3 8h48v46H3z" fill="#fff"/><circle cx="27" cy="31" r="21" fill="#8a35a0"/><path d="M21 42V22h7q6 0 6 6t-6 6h-5l10 9M21 22q-3 0-4 3" fill="none" stroke="#fff" stroke-width="4"/></svg></button>
                <button class="big" aria-label="Trash"><svg viewBox="0 0 54 54"><path d="M7 5h40l-5 44q-1 4-15 4t-15-4z" fill="url(#gBin)"/><ellipse cx="27" cy="6" rx="20" ry="4" fill="#4c5658" stroke="#99a2a4"/></svg></button>
            </nav>
        </div>
    </div>

    <script src="waves.js"></script>
</body>
</html>
```
FILE: styles.css
```css
* {
    box-sizing: border-box;
}
body {
    margin: 0;
    min-height: 100vh;
    padding: 0 40px 0 41px;
    color: #fff;
    font-family: "Roboto Condensed", "Liberation Sans Narrow", Roboto, sans-serif;
    font-size: 20px;
    background:
        linear-gradient(#33333f, #34303c 30%, #46303a 60%, #4a2c30) right / 40px 100% no-repeat,
        linear-gradient(#74767f, #a090a0 35%, #9c90a4 48%, #8f95a4 70%, #82858e) left / 41px 100% no-repeat;
}
button {
    padding: 0;
    border: none;
    background: none;
    color: inherit;
    font: inherit;
    cursor: pointer;
    display: flex;
    align-items: center;
    justify-content: center;
}
a {
    color: inherit;
    text-decoration: none;
}
ul {
    margin: 0;
    padding: 0;
    list-style: none;
}
svg {
    display: block;
}
.sprite {
    position: absolute;
    width: 0;
    height: 0;
}
.desktop {
    min-height: 100vh;
    display: flex;
    flex-direction: column;
    background: linear-gradient(90deg, #03121c, #06141c 12%, #2c1220 30%, #420a28 55%, #380a2a 75%, #7a1a0c 92%, #951e04);
}

/* System menu bar */
.menubar {
    height: 52px;
    display: flex;
    align-items: center;
    justify-content: space-between;
    padding: 0 22px 0 23px;
    font-family: Inter, sans-serif;
    font-size: 16px;
    font-weight: 500;
    background: linear-gradient(90deg, #26302c, #3c302a 9%, #6c3f1f 20%, #94430f 30%, #b04000 42%, #ac2e0c 58%, #80251c 70%, #50202a 85%, #24203a);
}
.menubar-left,
.menubar-right {
    display: flex;
    align-items: center;
}
.menubar-left {
    gap: 24px;
}
.menubar .app-name {
    font-weight: 700;
}
.apple {
    width: 16px;
    height: 20px;
}
.menubar-right svg {
    height: 28px;
}
.w40 { width: 40px; }
.w42 { width: 42px; }
.w44 { width: 44px; }
.w46 { width: 46px; }
.w50 { width: 50px; }
.w54 { width: 54px; }
.clock {
    margin-left: 8px;
    font-size: 17px;
    font-weight: 400;
}

/* Window */
.window-back {
    flex: 1;
    display: flex;
    padding-right: 8px;
    border-radius: 14px;
    background: #9fb1c6;
}
.window {
    flex: 1;
    display: flex;
    flex-direction: column;
    overflow: hidden;
    border-radius: 14px;
    border-top: 2px solid #55585f;
    background: #00000a;
}
.titlebar {
    height: 38px;
    display: flex;
    align-items: center;
    padding: 0 31px 2px 12px;
    background: #171620;
    color: #a9a9b4;
    font-size: 16px;
    letter-spacing: 1px;
}
.lights {
    display: flex;
    gap: 9px;
    margin-right: 44px;
}
.lights span {
    width: 15px;
    height: 15px;
    border-radius: 50%;
}
.lights .red { background: #ff5f57; }
.lights .yellow { background: #febc2e; }
.lights .green { background: #28c840; }
.title-menu {
    flex: 1;
    display: flex;
    gap: 46px;
}
.admin {
    letter-spacing: 0;
}
.project-bar {
    height: 50px;
    display: flex;
    align-items: center;
    background: #15202c;
    color: #737c96;
    font-weight: 300;
}
.close-project {
    width: 20px;
    margin: 0 129px 0 42px;
    color: #8990ab;
}
.close-project svg {
    width: 20px;
}
.project-name {
    width: 133px;
    font-size: 16px;
    letter-spacing: 1px;
}
.scene-name {
    flex: 1;
    font-size: 21px;
    letter-spacing: 1px;
}
.project-tools {
    height: 100%;
    display: flex;
    gap: 2px;
    color: #8a91a8;
}
.project-tools button {
    width: 83px;
    background: #232b3e;
}
.project-tools svg {
    width: 20px;
}
.body {
    flex: 1;
    display: flex;
}

/* Sidebar */
.sidebar {
    position: relative;
    z-index: 1;
    width: 388px;
    padding: 16px 0 0 36px;
    border-top-right-radius: 24px;
    background: #9a9fab;
    color: #07070f;
}
.logo {
    display: flex;
    align-items: center;
    height: 34px;
    gap: 5px;
    color: #d2d3de;
    font-family: Lato, sans-serif;
    font-size: 46px;
    font-weight: 900;
    letter-spacing: 4px;
    line-height: 34px;
}
.logo svg {
    width: 48px;
    height: 34px;
}
.version {
    margin-top: 5px;
    color: #5b5e6b;
    font-family: Inter, sans-serif;
    font-size: 16px;
    font-weight: 500;
    letter-spacing: 4px;
    line-height: 18px;
}
.project-select {
    position: relative;
    width: 328px;
    margin-top: 17px;
}
.project-select select {
    width: 100%;
    height: 50px;
    padding: 0 7px;
    border: none;
    border-radius: 5px;
    background: #383f58;
    color: #fff;
    font: inherit;
    letter-spacing: 1px;
    appearance: none;
}
.project-select svg {
    position: absolute;
    right: 5px;
    top: 22px;
    width: 10px;
}
.create-row,
.scenes-head {
    width: 328px;
    display: flex;
    align-items: center;
    justify-content: space-between;
}
.create-row {
    height: 36px;
    color: #26283a;
    font-size: 13px;
    letter-spacing: 1px;
}
.create-row button {
    width: 16px;
    margin-top: 4px;
    color: #d5d7de;
}
.create-row svg {
    width: 14px;
}
.scenes-head {
    margin-top: 29px;
}
.scenes-head h2 {
    margin: 0;
    color: #33364f;
    font-size: 20px;
    letter-spacing: 5px;
}
.new-scene {
    height: 31px;
    padding: 0 10px 0 14px;
    gap: 7px;
    border: 1px solid #565b6b;
    border-radius: 5px;
    color: #50566a;
    font-size: 16px;
    letter-spacing: 1px;
}
.new-scene svg {
    width: 12px;
}
.scenes {
    width: 335px;
    margin-top: 7px;
}
.scenes li {
    height: 78px;
    display: flex;
    align-items: center;
    padding: 0 8px;
    border-bottom: 1px solid #7d8290;
}
.scenes li:last-child {
    border-bottom: none;
}
.scenes li > svg {
    width: 28px;
    margin-right: 29px;
}
.scenes .folder {
    padding: 0 2px;
}
.scenes li div {
    flex: 1;
    display: flex;
    flex-direction: column;
    gap: 4px;
    margin-bottom: 6px;
}
.scenes strong {
    font-size: 16px;
    font-weight: 400;
    letter-spacing: 1px;
    line-height: 20px;
}
.scenes small {
    color: #464955;
    font-size: 12px;
    letter-spacing: 1px;
    line-height: 14px;
}
.scenes li button {
    width: 14px;
    color: #d0d2da;
}
.scenes li button svg {
    width: 12px;
}
.scenes .active {
    height: 72px;
    margin: 3px 0;
    border: none;
    border-radius: 5px;
    background: linear-gradient(90deg, #ffa95f, #f37bae 42%, #e23fff);
    box-shadow: 0 4px 0 -3px #7d8290;
}
.scenes .active small {
    color: #200a24;
}
.scenes .active button {
    color: #7a2290;
}
.demo-toggle {
    display: flex;
    align-items: center;
    gap: 13px;
    margin-top: 109px;
    padding-top: 11px;
    border-top: 1px dotted #444857;
    color: #1c1d28;
    font-size: 17px;
    font-weight: 300;
    line-height: 17px;
}
.demo-toggle input {
    appearance: none;
    width: 60px;
    height: 38px;
    margin: 0;
    padding: 3px;
    border-radius: 19px;
    background: #8a68ec;
    display: flex;
    justify-content: flex-end;
}
.demo-toggle input::before {
    content: "";
    width: 32px;
    height: 32px;
    border-radius: 50%;
    background: #242640;
}

/* Toolbar */
.main {
    flex: 1;
    min-width: 0;
    display: flex;
    flex-direction: column;
    margin-left: -24px;
    padding-left: 24px;
    background: linear-gradient(#1b2133 48px, #00000a 48px);
}
.toolbar {
    height: 48px;
    display: flex;
    justify-content: center;
    padding: 0 2px 2px 0;
    background: #1b2133;
    color: #3a4258;
}
.process {
    width: 88px;
    height: 48px;
    background: #444a70;
    color: #b5b9cf;
    font-size: 14px;
    font-style: italic;
    font-weight: 700;
}
.cast {
    width: 132px;
    gap: 6px;
    padding-left: 6px;
    color: #6d7690;
    font-size: 16px;
    font-weight: 300;
    letter-spacing: 2px;
}
.cast svg {
    width: 20px;
}
.tool-group {
    height: 48px;
    display: flex;
    justify-content: center;
    border-left: 2px solid #383e50;
}
.tool-group svg {
    width: 18px;
}
.tool-group svg.wide {
    width: 24px;
}
.tool-group button {
    width: 57px;
}
.views {
    width: 145px;
}
.tool-group .on {
    color: #fff;
}
.media {
    padding: 0 51px 0 17px;
}

/* Stage and dialog */
.stage {
    position: relative;
    flex: 1;
}
.dimmed {
    display: flex;
    justify-content: center;
    gap: 12px;
    padding: 8px 22px 0 0;
    color: #24241f;
    font-size: 14px;
}
.dim-card {
    height: 44px;
    padding-top: 2px;
    border-radius: 6px;
    background: #0e0f0e;
    text-align: center;
}
.c1 { width: 351px; }
.c2 { width: 234px; letter-spacing: 3px; }
.c3 { width: 140px; }
.c4 { width: 72px; padding-top: 6px; }
.dialog {
    position: absolute;
    inset: 33px 76px 158px 75px;
    padding: 54px 36px 0 35px;
    border-radius: 14px;
    background: #161621;
}
.dialog-head {
    height: 46px;
    display: flex;
    align-items: center;
    padding: 0 13px 0 16px;
    gap: 15px;
}
.clapper {
    width: 50px;
}
.dialog-head h1 {
    flex: 1;
    margin: 0;
    color: #00ffff;
    font-size: 42px;
    font-weight: 300;
    letter-spacing: 3px;
}
.close-dialog {
    align-self: flex-start;
}
.close-dialog svg {
    width: 20px;
}
.script-text {
    margin: 32px 0 27px;
    padding: 27px 16px;
    border-radius: 6px;
    background: #22222c;
    text-align: center;
    font-size: 21px;
    font-weight: 300;
    line-height: 25px;
}
.takes li {
    height: 67px;
    display: grid;
    grid-template-columns: 256px 1fr 60px 80px 124px;
    align-items: center;
    border-bottom: 1px solid #272834;
}
.takes li:last-child {
    height: 66px;
    border-bottom: none;
}
.take-name {
    display: flex;
    align-items: center;
    gap: 12px;
    padding-left: 2px;
    font-size: 21px;
    font-weight: 300;
}
.take-name svg {
    width: 32px;
    color: #6a7089;
}
.wave {
    width: 100%;
    height: 38px;
    fill: #666d86;
}
.play {
    width: 18px;
    color: #747a90;
}
.cloud {
    width: 32px;
    color: #747a90;
}
.make-current {
    width: 118px;
    height: 36px;
    justify-self: end;
    border-radius: 4px;
    background: linear-gradient(90deg, #e23fff, #ffa95f);
    font-size: 16px;
}
.mixer {
    height: 93px;
    display: flex;
    justify-content: space-between;
    margin-top: 19px;
    padding: 23px 92px 0 93px;
    border-radius: 12px;
    background: linear-gradient(#22222c, #1a212b 35%, #1c1c27 55%, #15202a 80%, #161c27);
}
.slider {
    width: 298px;
    font-size: 16px;
    font-weight: 300;
    line-height: 20px;
}
.slider-labels {
    display: flex;
    justify-content: space-between;
}
.pink { --accent: #e23fff; }
.cyan { --accent: #00ffff; }
.orange { --accent: #ffa95f; }
.slider output {
    color: var(--accent);
}
.slider input {
    appearance: none;
    display: block;
    width: 280px;
    height: 20px;
    margin: 15px 0 0 13px;
    background: linear-gradient(#353c4e, #353c4e) left / 272px 2px no-repeat;
}
.slider input::-webkit-slider-thumb {
    appearance: none;
    width: 24px;
    height: 19px;
    border-radius: 4px;
    background: var(--accent);
}
.add-take {
    width: 206px;
    height: 49px;
    border-radius: 5px;
    background: linear-gradient(90deg, #ffa95f, #f37bae 42%, #e23fff);
    font-size: 19px;
    font-weight: 300;
    letter-spacing: 2px;
}

/* Player */
.player {
    background: #171727;
}
.player-bar {
    height: 46px;
    display: flex;
    align-items: center;
    justify-content: space-between;
    padding-right: 72px;
    background: linear-gradient(#171721, #15202b);
}
.player-controls {
    width: 314px;
    height: 100%;
    display: flex;
    border-top-right-radius: 45px;
    background: linear-gradient(90deg, #171e29, #283140);
    color: #8f919a;
}
.player-controls button {
    width: 66px;
    padding-left: 16px;
}
.player-controls svg {
    width: 24px;
}
.player-controls .music-tab {
    width: 71px;
    margin-right: 11px;
    padding: 0;
    border-bottom-right-radius: 22px;
    background: linear-gradient(#e23fff, #9d8cf0);
}
.player-controls .music-tab svg {
    width: 32px;
}
.player-controls .pause {
    width: 26px;
}
.player-title {
    font-size: 16px;
    font-weight: 300;
    letter-spacing: 7px;
}
.music-wave {
    width: calc(100% - 42px);
    height: 60px;
    margin: 35px 36px 27px 6px;
}
.played { fill: #e23fff; }
.unplayed { fill: #262d3e; }
.cursor { fill: #aeb0ba; }

/* Dock */
.dock-area {
    display: flex;
    justify-content: center;
    padding: 2px 0 6px;
}
.dock {
    height: 75px;
    display: flex;
    align-items: center;
    margin-right: 4px;
    padding: 0 3px;
    border: 1px solid #5f4450;
    border-radius: 20px;
    background: linear-gradient(90deg, #14191f, #1a1a22 14%, #47182a 28%, #521624 50%, #4a1430 72%, #5c1c24 88%, #74241c);
}
.dock button {
    position: relative;
    width: 62px;
    height: 100%;
    padding-bottom: 6px;
}
.dock button > svg {
    width: 46px;
    height: 46px;
}
.dock .big > svg {
    width: 54px;
    height: 54px;
}
.dock .running::after {
    content: "";
    position: absolute;
    bottom: 2px;
    width: 6px;
    height: 6px;
    border-radius: 50%;
    background: #c3a5b0;
}
.badge {
    position: absolute;
    top: 5px;
    right: 0;
    width: 21px;
    height: 21px;
    border-radius: 50%;
    background: #f93a30;
    font-family: Inter, sans-serif;
    font-size: 13px;
    line-height: 21px;
}
.divider {
    width: 2px;
    height: 56px;
    margin: 0 13px;
    background: #75434b;
}
```
FILE: waves.js
```js
// Each take is a list of phrases; a phrase is a list of "position:loudness" points.
const takes = [
    "800:3 803:26 812:20 835:6 838:1 856:1 | 868:9 876:22 908:18 920:8 940:14 955:14 970:20 1000:18 1015:10 1030:24 1045:10 1055:18 1075:18 1098:4 1100:1 1158:1 | 1162:1 1170:18 1176:6 1190:20 1230:20 1250:15 1256:4 1263:16 1300:14 1306:20 1340:8 1345:1 1365:1 | 1375:22 1388:28 1400:25 1425:16 1435:24 1447:10 1456:18 1470:28 1500:20 1509:3 1515:24 1525:6 1530:2 1540:22 1553:10 1570:20 1590:10 1600:22 1625:8 1627:1 1669:1 | 1683:3 1690:20 1702:28 1710:8 1722:20 1745:25 1755:4 1760:26 1785:14 1790:1 1809:1 | 1815:6 1819:30 1840:18 1875:26 1890:8 1900:22 1930:20 1950:24 1970:12 1985:24 2000:16 2030:26 2065:14 2072:28 2095:5 2097:1 2110:1",
    "797:4 800:30 820:28 828:6 835:22 850:18 855:8 858:26 870:12 880:20 890:6 897:22 910:10 918:24 935:14 950:20 958:4 963:20 975:10 990:8 1005:6 1015:10 1040:1 | 1108:14 1117:26 1132:14 1138:2 1150:12 1160:20 1180:12 1190:24 1205:14 1220:20 1226:6 1235:20 1242:5 1250:18 1260:16 1275:26 1283:6 1290:20 1320:10 1343:24 1355:10 1365:8 1380:22 1400:6 1404:2 | 1466:5 1470:22 1480:16 1493:27 1510:10 1530:22 1555:12 1570:18 1585:14 1595:16 1615:27 1622:3 1630:16 1665:12 1672:2 1679:26 1690:10 1705:20 1725:12 1745:18 1775:10 1795:10 1802:4 | 1857:4 1862:22 1872:26 1880:12 1900:16 1920:26 1950:18 1968:4 1975:18 1982:5 1995:16 2010:14 2030:14 2045:20 2065:4 2072:2 2085:12 2100:4",
    "797:4 800:28 812:16 830:20 836:6 843:22 855:8 866:24 880:18 895:10 915:12 925:14 940:6 950:10 965:5 975:2 | 1004:2 1008:24 1020:24 1030:10 1045:12 1060:12 1090:16 1103:4 1109:24 1130:18 1150:18 1170:14 1190:14 1205:12 1215:8 1229:3 | 1255:1 1259:1 | 1273:10 1285:22 1297:24 1310:16 1320:6 1335:16 1355:10 1370:14 1380:6 1400:16 1430:8 1455:20 1475:8 1485:18 1500:10 1525:10 1545:14 1562:2 1568:12 1580:18 1600:6 | 1620:1 1623:1 | 1654:4 1668:30 1674:6 1685:16 1715:20 1730:8 1750:16 1790:8 1805:16 1825:10 1848:3 | 1904:5 1910:16 1918:5 1928:12 1935:5 1944:24 1965:12 1980:18 1985:6 2000:10 2010:4 2020:16 2045:24 2060:20 2085:14 2100:3"
];

// Peaks of the part of the music that has been played
const playedPeaks = [
    1, 1, 3, 19, 5, 16, 10, 15, 14, 14, 11, 12, 13, 14, 16, 17, 18, 12, 5, 26, 13, 20, 14, 27, 10, 20, 10, 15,
    26, 18, 17, 21, 8, 13, 21, 6, 20, 15, 25, 13, 22, 13, 21, 13, 10, 22, 14, 15, 16, 11, 7, 21, 7, 13, 22, 24,
    7, 15, 11, 11, 21, 10, 18, 8, 16, 8, 17, 12, 12, 8, 9, 8, 13, 14, 9, 15, 10, 15, 13, 16, 14, 21, 7, 22,
    7, 7, 21, 10, 23, 23, 25, 12, 28, 7, 27, 23, 23, 21, 26, 16, 9, 21, 12, 22, 16, 15, 15, 15, 11, 7, 17, 7
];

const svgNs = "http://www.w3.org/2000/svg";

// Repeatable noise so a wave looks the same on every load
function noise(n) {
    const v = Math.sin(n * 12.9898) * 43758.5453;
    return v - Math.floor(v);
}

function addBar(svg, x, half, width, className) {
    const bar = document.createElementNS(svgNs, "rect");
    bar.setAttribute("x", x);
    bar.setAttribute("y", 30 - half);
    bar.setAttribute("width", width);
    bar.setAttribute("height", half * 2);
    if (className) bar.setAttribute("class", className);
    svg.appendChild(bar);
}

document.querySelectorAll(".wave").forEach((svg) => {
    const phrases = takes[svg.dataset.take].split(" | ");
    phrases.forEach((phrase) => {
        const points = phrase.split(" ").map((p) => p.split(":").map(Number));
        const end = points[points.length - 1][0];
        let i = 0;
        for (let x = points[0][0]; x <= end; x += 4) {
            while (i < points.length - 2 && points[i + 1][0] < x) i++;
            const [x0, a0] = points[i];
            const [x1, a1] = points[i + 1];
            const level = a0 + (a1 - a0) * (x - x0) / (x1 - x0);
            addBar(svg, x, Math.max(1, level * (0.75 + 0.35 * noise(x))), 3);
        }
    });
});

// Background music
const music = document.getElementById("musicWave");
const barCount = 562;
for (let i = 0; i < barCount; i++) {
    if (i < playedPeaks.length) {
        addBar(music, i * 4, playedPeaks[i], 3, "played");
        continue;
    }
    let half = (15 + 4 * Math.sin(i / 13) + 3 * Math.sin(i / 5)) * (0.55 + 0.8 * noise(i + 1));
    half = Math.min(29, half);
    if (i > barCount - 14) half = Math.max(1, (barCount - i) / 4);
    addBar(music, i * 4, half, 3, "unplayed");
}
addBar(music, playedPeaks.length * 4 - 1, 30, 1, "cursor");
```
